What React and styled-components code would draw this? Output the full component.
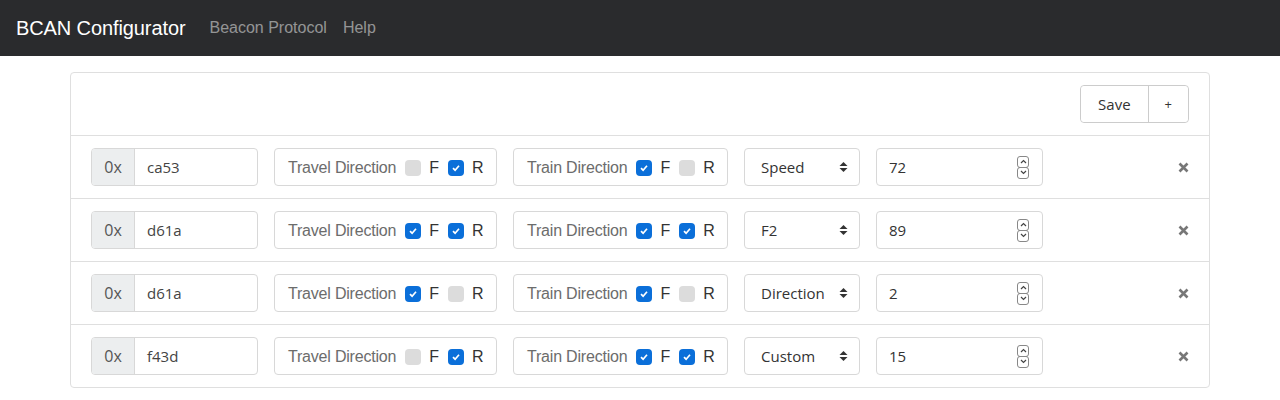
import React from 'react';
import styled, { createGlobalStyle } from 'styled-components';

const GlobalStyle = createGlobalStyle`
    body {
        margin: 0;
        background: #fff;
        font-family: "Liberation Sans", Arial, sans-serif;
    }
`;

const Nav = styled.nav`
    height: 56px;
    background-color: #2a2b2d;
    display: flex;
    align-items: center;
    padding: 0 16px;
`;
const Brand = styled.span`
    color: #fff;
    font-size: 20px;
    margin-right: 24px;
    letter-spacing: -0.1px;
`;
const NavLink = styled.a`
    color: rgba(255, 255, 255, 0.5);
    font-size: 16px;
    margin-right: 16px;
    text-decoration: none;
`;

const Container = styled.div`
    max-width: 1140px;
    margin: 16px auto 0;
`;
const Card = styled.div`
    border: 1px solid #dfdfdf;
    border-radius: 4px;
`;
const CardHeader = styled.div`
    display: flex;
    justify-content: flex-end;
    padding: 12px 20px;
`;
const ButtonGroup = styled.div`
    display: flex;
    border: 1px solid #ccc;
    border-radius: 4px;
    height: 36px;
`;
const Button = styled.button`
    font-family: "Open Sans", "Noto Sans", sans-serif;
    font-size: ${p => p.small ? '13px' : '15px'};
    font-weight: 500;
    color: #333;
    background: #fff;
    border: none;
    border-left: ${p => p.first ? 'none' : '1px solid #ccc'};
    border-radius: ${p => p.first ? '4px 0 0 4px' : '0 4px 4px 0'};
    padding: 0 ${p => p.small ? '16px' : '17px'};
`;
const Row = styled.div`
    display: flex;
    align-items: center;
    border-top: 1px solid #dfdfdf;
    padding: 12px 20px;
    gap: 16px;
`;
const InputGroup = styled.div`
    display: flex;
    width: 167px;
    height: 38px;
    border: 1px solid #d8d8d8;
    border-radius: 4px;
    box-sizing: border-box;
    overflow: hidden;
    flex-shrink: 0;
`;
const Addon = styled.span`
    width: 42px;
    background: #eceeef;
    border-right: 1px solid #d8d8d8;
    display: flex;
    align-items: center;
    justify-content: center;
    font-family: "Open Sans", "Noto Sans", sans-serif;
    font-size: 16px;
    color: #555;
`;
const TextValue = styled.span`
    display: flex;
    align-items: center;
    padding-left: 12px;
    font-family: "Open Sans", "Noto Sans", sans-serif;
    font-size: 15px;
    font-weight: 500;
    color: #444;
`;
const CheckBox = styled.div`
    display: flex;
    align-items: center;
    width: ${p => p.w}px;
    height: 38px;
    box-sizing: border-box;
    border: 1px solid #d8d8d8;
    border-radius: 4px;
    padding: 1px 0 0 13px;
    white-space: nowrap;
    flex-shrink: 0;
`;
const BoxLabel = styled.span`
    color: #6c6c6c;
    font-size: 16px;
    margin-right: 9px;
    letter-spacing: -0.2px;
`;
const Option = styled.span`
    display: flex;
    align-items: center;
    color: #333;
    font-size: 16px;
    margin-right: ${p => p.last ? '0' : '9px'};
`;
const Tick = styled.span`
    width: 16px;
    height: 16px;
    border-radius: 4px;
    background: ${p => p.on ? '#0b6fd9' : '#dcdcdc'};
    display: flex;
    align-items: center;
    justify-content: center;
    margin-right: 8px;
`;
const Select = styled.div`
    width: 116px;
    height: 38px;
    box-sizing: border-box;
    border: 1px solid #d8d8d8;
    border-radius: 4px;
    display: flex;
    align-items: center;
    justify-content: space-between;
    padding: 0 11px 0 16px;
    font-family: "Open Sans", "Noto Sans", sans-serif;
    font-size: 15px;
    font-weight: 500;
    color: #333;
    flex-shrink: 0;
`;
const NumberBox = styled.div`
    width: 167px;
    height: 38px;
    box-sizing: border-box;
    border: 1px solid #d8d8d8;
    border-radius: 4px;
    display: flex;
    align-items: center;
    justify-content: space-between;
    padding: 0 13px 0 12px;
    font-family: "Open Sans", "Noto Sans", sans-serif;
    font-size: 15px;
    font-weight: 500;
    color: #333;
    flex-shrink: 0;
`;
const Spinner = styled.div`
    display: flex;
    flex-direction: column;
`;
const SpinBtn = styled.span`
    width: 12px;
    height: 12px;
    border: 1px solid #888;
    border-radius: 3px;
    box-sizing: border-box;
    display: flex;
    align-items: center;
    justify-content: center;
    margin-top: ${p => p.down ? '-1px' : '0'};
`;
const Remove = styled.span`
    margin-left: auto;
    display: flex;
    align-items: center;
`;

const rows = [
    { id: 'ca53', travel: [false, true], train: [true, false], type: 'Speed', value: 72 },
    { id: 'd61a', travel: [true, true], train: [true, true], type: 'F2', value: 89 },
    { id: 'd61a', travel: [true, false], train: [true, false], type: 'Direction', value: 2 },
    { id: 'f43d', travel: [false, true], train: [true, true], type: 'Custom', value: 15 },
];

const Check = ({ on }) => (
    <Tick on={on}>
        {on && (
            <svg width="8" height="8" viewBox="0 0 8 8">
                <path d="M1 4.2 L3.1 6.2 L7 1.8" stroke="#fff" strokeWidth="1.7" fill="none" />
            </svg>
        )}
    </Tick>
);

const DirBox = ({ label, values, w }) => (
    <CheckBox w={w}>
        <BoxLabel>{label}</BoxLabel>
        <Option><Check on={values[0]} />F</Option>
        <Option last><Check on={values[1]} />R</Option>
    </CheckBox>
);

const App = () => (
    <>
        <GlobalStyle />
        <Nav>
            <Brand>BCAN Configurator</Brand>
            <NavLink href="#">Beacon Protocol</NavLink>
            <NavLink href="#">Help</NavLink>
        </Nav>
        <Container>
            <Card>
                <CardHeader>
                    <ButtonGroup>
                        <Button first>Save</Button>
                        <Button small>+</Button>
                    </ButtonGroup>
                </CardHeader>
                {rows.map((r, i) => (
                    <Row key={i}>
                        <InputGroup>
                            <Addon>0x</Addon>
                            <TextValue>{r.id}</TextValue>
                        </InputGroup>
                        <DirBox label="Travel Direction" values={r.travel} w={223} />
                        <DirBox label="Train Direction" values={r.train} w={215} />
                        <Select>
                            {r.type}
                            <svg width="9" height="12" viewBox="0 0 9 12">
                                <path d="M4.5 1 L8.5 5 L0.5 5 Z M4.5 11 L8.5 7 L0.5 7 Z" fill="#333" />
                            </svg>
                        </Select>
                        <NumberBox>
                            {r.value}
                            <Spinner>
                                <SpinBtn>
                                    <svg width="7" height="5" viewBox="0 0 7 5">
                                        <path d="M1 4 L3.5 1.5 L6 4" stroke="#444" strokeWidth="1.2" fill="none" />
                                    </svg>
                                </SpinBtn>
                                <SpinBtn down>
                                    <svg width="7" height="5" viewBox="0 0 7 5">
                                        <path d="M1 1 L3.5 3.5 L6 1" stroke="#444" strokeWidth="1.2" fill="none" />
                                    </svg>
                                </SpinBtn>
                            </Spinner>
                        </NumberBox>
                        <Remove>
                            <svg width="11" height="11" viewBox="0 0 11 11">
                                <path d="M1.5 1.5 L9.5 9.5 M9.5 1.5 L1.5 9.5" stroke="#777" strokeWidth="2.6" />
                            </svg>
                        </Remove>
                    </Row>
                ))}
            </Card>
        </Container>
    </>
);

export default App;
